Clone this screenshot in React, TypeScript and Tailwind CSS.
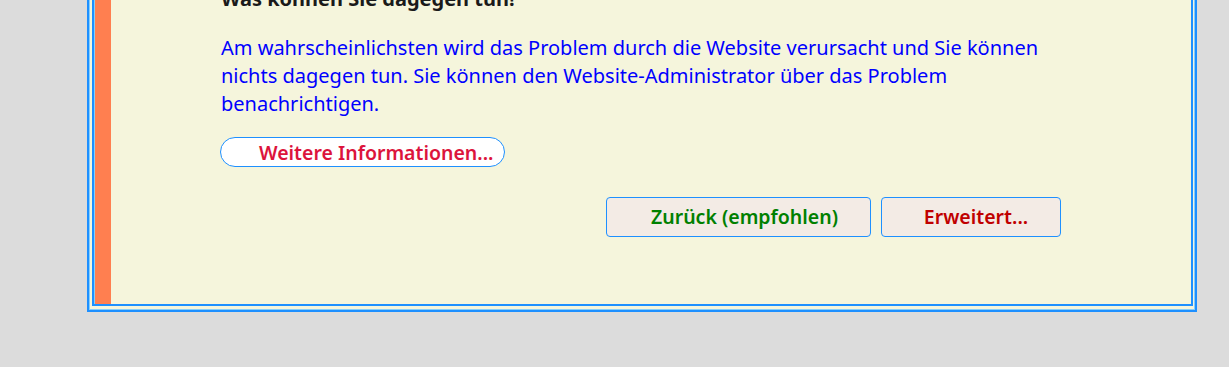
import React from 'react';

const font = { fontFamily: '"Noto Sans", "Open Sans", sans-serif' };

const App = () => {
    return (
        <div
            className="h-[367px] w-[1229px] overflow-hidden bg-[#dcdcdc] pl-[87px]"
            style={font}
        >
            <div className="mt-[-40px] w-[1110px] border-2 border-[#1e90ff] bg-[#f5f5dc] pt-[2px] pl-[3px] pr-[2px] pb-[4px] shadow-[inset_0_0_0_1px_#87cefa]">
                <div className="flex border-2 border-[#1e90ff]">
                    <div className="w-[17px] shrink-0 border-l border-[#87cefa] bg-[#ff7f50]" />
                    <div className="flex-1 bg-[#f5f5dc] pt-[19px] pl-[110px] pr-[130px] pb-[67px]">
                        <h2 className="text-[20px] leading-[28px] font-bold text-[#1a1a1a]">
                            Was können Sie dagegen tun!
                        </h2>
                        <p className="mt-[21px] text-[20px] leading-[28px] text-[#0000ff]">
                            Am wahrscheinlichsten wird das Problem durch die
                            Website verursacht und Sie können nichts dagegen
                            tun. Sie können den Website-Administrator über das
                            Problem benachrichtigen.
                        </p>
                        <button className="mt-[19px] ml-[-1px] flex h-[30px] w-[285px] items-center rounded-full border border-[#1e90ff] bg-white pl-[38px] pt-[1px] text-[19.5px] font-semibold text-[#dc143c]">
                            Weitere Informationen...
                        </button>
                        <div className="mt-[30px] flex justify-end gap-[10px]">
                            <button className="flex h-[40px] w-[265px] items-center justify-center rounded-[4px] border border-[#1e90ff] bg-[#f3ebe5] pl-[12px] text-[19.5px] font-semibold text-[#008000]">
                                Zurück (empfohlen)
                            </button>
                            <button className="flex h-[40px] w-[180px] items-center justify-center rounded-[4px] border border-[#1e90ff] bg-[#f3ebe5] pl-[10px] text-[19.5px] font-semibold text-[#c00000]">
                                Erweitert...
                            </button>
                        </div>
                    </div>
                </div>
            </div>
        </div>
    );
};

export default App;
